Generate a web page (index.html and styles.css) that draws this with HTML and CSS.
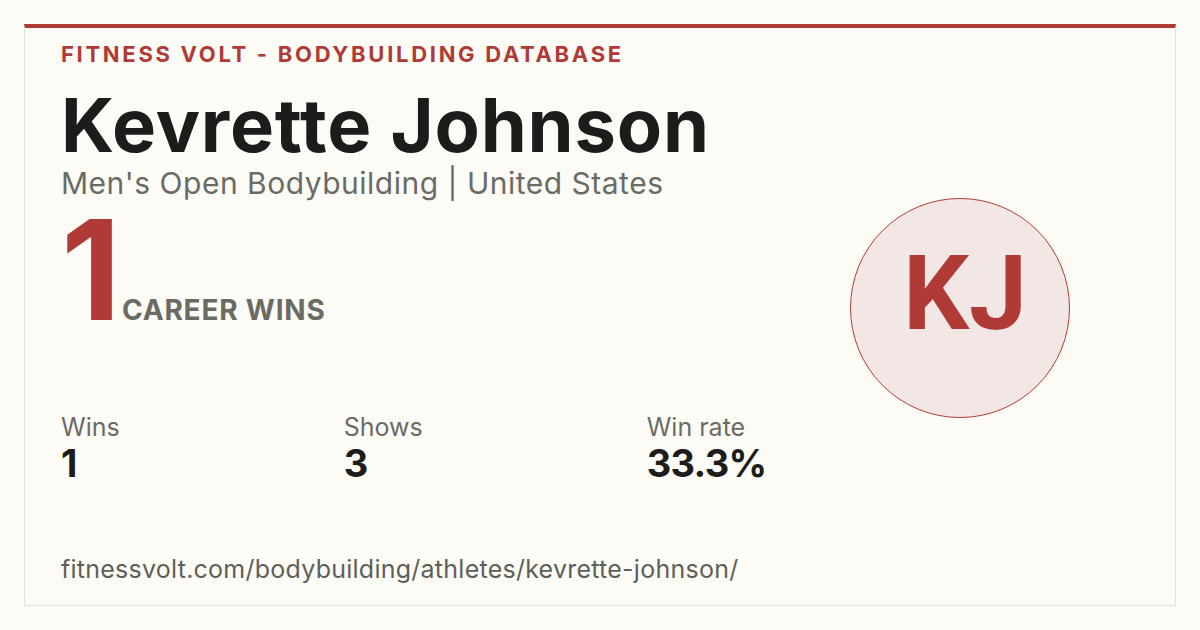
FILE: index.html
```html
<!DOCTYPE html>
<html>
<head>
<meta charset="utf-8">
<link rel="stylesheet" href="styles.css">
</head>
<body>
<div class="card">
  <div class="brand">FITNESS VOLT - BODYBUILDING DATABASE</div>
  <div class="main">
    <div class="left">
      <h1 class="name">Kevrette Johnson</h1>
      <div class="sub">Men's Open Bodybuilding | United States</div>
      <div class="hero">
        <span class="big">1</span>
        <span class="big-label">CAREER WINS</span>
      </div>
      <div class="stats">
        <div class="stat"><div class="stat-label">Wins</div><div class="stat-value">1</div></div>
        <div class="stat"><div class="stat-label">Shows</div><div class="stat-value">3</div></div>
        <div class="stat"><div class="stat-label">Win rate</div><div class="stat-value">33.3%</div></div>
      </div>
      <div class="url">fitnessvolt.com/bodybuilding/athletes/kevrette-johnson/</div>
    </div>
    <div class="aside">
      <div class="avatar">KJ</div>
    </div>
  </div>
</div>
</body>
</html>
```
FILE: styles.css
```css
html, body {
  margin: 0;
  padding: 0;
}
body {
  background: #fcfbf6;
  font-family: Inter, "Open Sans", sans-serif;
  width: 1200px;
  height: 630px;
  overflow: hidden;
}
.card {
  margin: 24px;
  height: 582px;
  box-sizing: border-box;
  border: 1px solid #e4e2dd;
  border-top: 4px solid #b03a35;
  padding: 12px 36px 0 36px;
}
.brand {
  color: #b03a35;
  font-weight: 700;
  font-size: 22px;
  line-height: 28px;
  letter-spacing: 2.7px;
}
.main {
  display: flex;
}
.left {
  flex: 1;
}
.name {
  margin: 17px 0 0 0;
  font-size: 74px;
  line-height: 80px;
  font-weight: 700;
  color: #1c1c1a;
  letter-spacing: 0.8px;
}
.sub {
  font-size: 30px;
  line-height: 36px;
  color: #6b6b66;
  margin-top: 0;
  letter-spacing: 0.5px;
}
.hero {
  display: flex;
  align-items: baseline;
  margin-top: -1px;
}
.big {
  font-size: 139px;
  line-height: 140px;
  font-weight: 700;
  color: #b03a35;
  letter-spacing: -4px;
}
.big-label {
  margin-left: 5px;
  font-size: 28px;
  font-weight: 700;
  color: #6b6b63;
  letter-spacing: 0.8px;
}
.stats {
  display: flex;
  gap: 224px;
  margin-top: 73px;
}
.stat-label {
  font-size: 25px;
  line-height: 29px;
  color: #6b6b66;
}
.stat-value {
  font-size: 38px;
  line-height: 42px;
  font-weight: 700;
  color: #1c1c1a;
  letter-spacing: -0.7px;
}
.url {
  margin-top: 70px;
  font-size: 25px;
  line-height: 30px;
  color: #5f5f5a;
  letter-spacing: 0.25px;
}
.aside {
  width: 220px;
  margin-right: 69px;
  padding-top: 130px;
}
.avatar {
  width: 220px;
  height: 220px;
  box-sizing: border-box;
  border-radius: 50%;
  border: 1.5px solid #b03a35;
  background: #f3e7e6;
  color: #b03a35;
  font-family: Roboto, "Liberation Sans", sans-serif;
  font-weight: 700;
  font-size: 104px;
  display: flex;
  align-items: center;
  justify-content: center;
  padding: 0 0 30px 10px;
}
```
